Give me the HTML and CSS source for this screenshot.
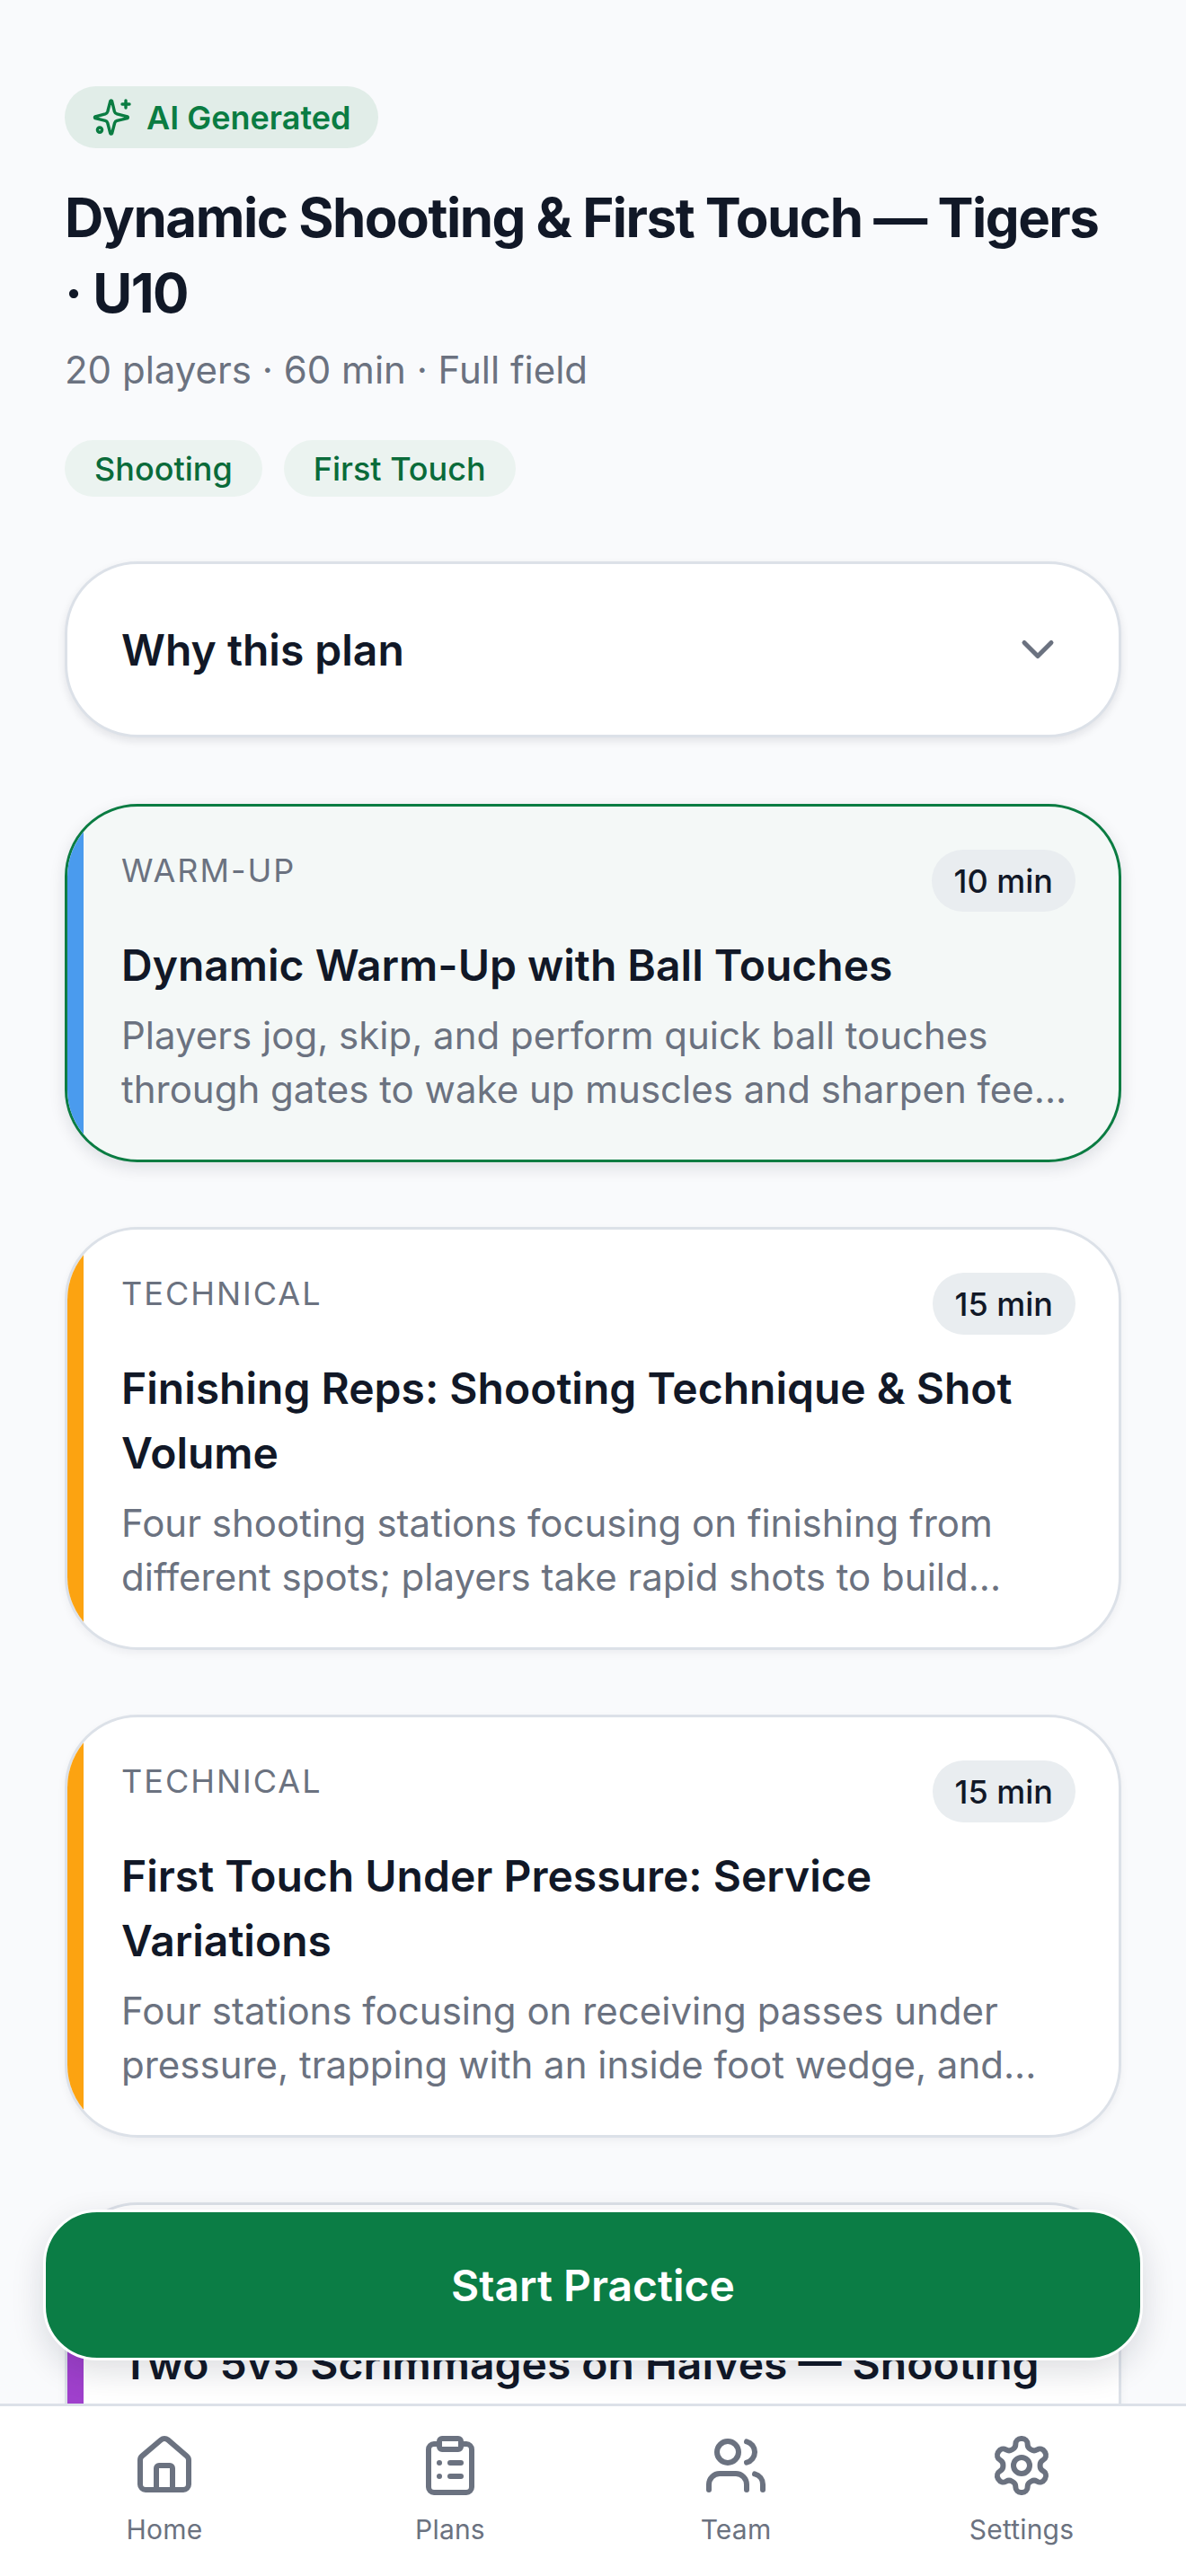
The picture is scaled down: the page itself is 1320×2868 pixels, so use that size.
FILE: index.html
```html
<!DOCTYPE html>
<html lang="en">
<head>
<meta charset="utf-8">
<title>Practice plan</title>
<link rel="stylesheet" href="styles.css">
</head>
<body>
<div class="app">
  <main class="content">
    <div class="badge">
      <svg class="badge-icon" viewBox="0 0 24 24" fill="none" stroke="currentColor" stroke-width="1.7" stroke-linecap="round" stroke-linejoin="round">
        <path d="M8.9 15A2 2 0 0 0 7.6 13.7l-5.6-1.4a.5.5 0 0 1 0-.9L7.6 9.9A2 2 0 0 0 8.9 8.6l1.5-5.8a.5.5 0 0 1 .9 0l1.4 5.8A2 2 0 0 0 14.1 9.9l5.8 1.5a.5.5 0 0 1 0 .9l-5.8 1.4A2 2 0 0 0 12.8 15l-1.5 5.8a.5.5 0 0 1-.9 0z"/>
        <path d="M19 2.5v4"/><path d="M21 4.500h-4"/><circle cx="4.500" cy="18.800" r="1.300"/>
      </svg>
      <span>AI Generated</span>
    </div>
    <h1 class="title">Dynamic Shooting &amp; First Touch — Tigers · U10</h1>
    <p class="meta">20 players · 60 min · Full field</p>
    <div class="chips">
      <span class="chip">Shooting</span>
      <span class="chip">First Touch</span>
    </div>
    <button class="why" type="button">
      <span>Why this plan</span>
      <svg class="chevron" viewBox="0 0 24 24" fill="none" stroke="currentColor" stroke-width="2" stroke-linecap="round" stroke-linejoin="round"><path d="m6 9 6 6 6-6"/></svg>
    </button>
    <div class="cards">
      <article class="card card-active">
        <div class="strip strip-blue"></div>
        <div class="card-body">
          <div class="card-top"><span class="phase">WARM-UP</span><span class="dur">10 min</span></div>
          <h2 class="card-title">Dynamic Warm-Up with Ball Touches</h2>
          <p class="card-desc">Players jog, skip, and perform quick ball touches through gates to wake up muscles and sharpen fee...</p>
        </div>
      </article>
      <article class="card">
        <div class="strip strip-orange"></div>
        <div class="card-body">
          <div class="card-top"><span class="phase">TECHNICAL</span><span class="dur">15 min</span></div>
          <h2 class="card-title">Finishing Reps: Shooting Technique &amp; Shot Volume</h2>
          <p class="card-desc">Four shooting stations focusing on finishing from different spots; players take rapid shots to build...</p>
        </div>
      </article>
      <article class="card">
        <div class="strip strip-orange"></div>
        <div class="card-body">
          <div class="card-top"><span class="phase">TECHNICAL</span><span class="dur">15 min</span></div>
          <h2 class="card-title">First Touch Under Pressure: Service Variations</h2>
          <p class="card-desc">Four stations focusing on receiving passes under pressure, trapping with an inside foot wedge, and...</p>
        </div>
      </article>
      <article class="card card-last">
        <div class="strip strip-purple"></div>
        <div class="card-body">
          <h2 class="card-title card-title-last">Two 5v5 Scrimmages on Halves — Shooting</h2>
        </div>
      </article>
    </div>
    <button class="start" type="button">Start Practice</button>
  </main>
  <nav class="tabs">
    <a class="tab">
      <svg class="tab-icon" viewBox="0 0 24 24" fill="none" stroke="currentColor" stroke-width="2" stroke-linecap="round" stroke-linejoin="round"><path d="M15 21v-8a1 1 0 0 0-1-1h-4a1 1 0 0 0-1 1v8"/><path d="M3 10a2 2 0 0 1 .709-1.528l7-6a2 2 0 0 1 2.582 0l7 6A2 2 0 0 1 21 10v9a2 2 0 0 1-2 2H5a2 2 0 0 1-2-2z"/></svg>
      <span>Home</span>
    </a>
    <a class="tab">
      <svg class="tab-icon" viewBox="0 0 24 24" fill="none" stroke="currentColor" stroke-width="2" stroke-linecap="round" stroke-linejoin="round"><rect x="8" y="2" width="8" height="4" rx="1"/><path d="M16 4h2a2 2 0 0 1 2 2v14a2 2 0 0 1-2 2H6a2 2 0 0 1-2-2V6a2 2 0 0 1 2-2h2"/><path d="M12 11h4"/><path d="M12 16h4"/><path d="M8 11h.01"/><path d="M8 16h.01"/></svg>
      <span>Plans</span>
    </a>
    <a class="tab">
      <svg class="tab-icon" viewBox="0 0 24 24" fill="none" stroke="currentColor" stroke-width="2" stroke-linecap="round" stroke-linejoin="round"><path d="M16 21v-2a4 4 0 0 0-4-4H6a4 4 0 0 0-4 4v2"/><circle cx="9" cy="7" r="4"/><path d="M22 21v-2a4 4 0 0 0-3-3.87"/><path d="M16 3.130a4 4 0 0 1 0 7.750"/></svg>
      <span>Team</span>
    </a>
    <a class="tab">
      <svg class="tab-icon" viewBox="0 0 24 24" fill="none" stroke="currentColor" stroke-width="2" stroke-linecap="round" stroke-linejoin="round"><path d="M12.220 2h-.44a2 2 0 0 0-2 2v.18a2 2 0 0 1-1 1.730l-.43.25a2 2 0 0 1-2 0l-.15-.08a2 2 0 0 0-2.730.73l-.22.38a2 2 0 0 0 .73 2.730l.15.1a2 2 0 0 1 1 1.720v.51a2 2 0 0 1-1 1.740l-.15.09a2 2 0 0 0-.73 2.730l.22.38a2 2 0 0 0 2.730.73l.15-.08a2 2 0 0 1 2 0l.43.25a2 2 0 0 1 1 1.730V20a2 2 0 0 0 2 2h.44a2 2 0 0 0 2-2v-.18a2 2 0 0 1 1-1.730l.43-.25a2 2 0 0 1 2 0l.15.08a2 2 0 0 0 2.730-.73l.22-.39a2 2 0 0 0-.73-2.730l-.15-.08a2 2 0 0 1-1-1.740v-.5a2 2 0 0 1 1-1.740l.15-.09a2 2 0 0 0 .73-2.730l-.22-.38a2 2 0 0 0-2.730-.73l-.15.08a2 2 0 0 1-2 0l-.43-.25a2 2 0 0 1-1-1.730V4a2 2 0 0 0-2-2z"/><circle cx="12" cy="12" r="3"/></svg>
      <span>Settings</span>
    </a>
  </nav>
</div>
</body>
</html>
```

FILE: styles.css
```css
* { box-sizing: border-box; }
html, body { margin: 0; padding: 0; }
body {
  font-family: Inter, "Liberation Sans", sans-serif;
  background: #f9fafc;
  color: #111827;
}
.app {
  position: relative;
  width: 1320px;
  height: 2868px;
  display: flex;
  flex-direction: column;
  overflow: hidden;
}
.content {
  flex: 1;
  min-height: 0;
  overflow: hidden;
  padding: 96px 72px 0;
}
.badge {
  display: inline-flex;
  align-items: center;
  gap: 13px;
  height: 69px;
  padding: 0 30px 0 32px;
  border-radius: 35px;
  background: #e1ede8;
  color: #0a7c42;
  font-size: 36px;
  font-weight: 600;
  vertical-align: top;
}
.badge-icon { width: 48px; height: 48px; flex: none; margin-left: -2px; }
.title {
  margin: 35px 0 0;
  font-size: 60px;
  line-height: 84px;
  font-weight: 700;
  letter-spacing: -1.5px;
}
.meta {
  margin: 14px 0 0;
  font-size: 42px;
  line-height: 60px;
  color: #6b7280;
}
.chips {
  display: flex;
  gap: 24px;
  margin-top: 48px;
}
.chip {
  height: 63px;
  display: flex;
  align-items: center;
  padding: 0 33px;
  border-radius: 32px;
  background: #ebf3f0;
  color: #0a6b3a;
  font-size: 36px;
  font-weight: 500;
}
.why {
  display: flex;
  align-items: center;
  justify-content: space-between;
  width: 100%;
  height: 196px;
  margin-top: 72px;
  padding: 0 60px 0 60px;
  border: 3px solid #dce1e8;
  border-radius: 81px;
  background: #fff;
  box-shadow: 0 4px 10px rgba(17, 24, 39, 0.1);
  color: #111827;
  font: 600 48px Inter, "Liberation Sans", sans-serif;
}
.chevron { width: 60px; height: 60px; color: #6b7280; }
.cards {
  display: flex;
  flex-direction: column;
  gap: 72px;
  margin-top: 74px;
}
.card {
  display: flex;
  flex: none;
  border: 3px solid #dce1e8;
  border-radius: 81px;
  background: #fff;
  overflow: hidden;
  box-shadow: 0 4px 10px rgba(17, 24, 39, 0.05);
}
.card-active {
  border-color: #0a7c42;
  background: #f4f8f7;
  box-shadow: 0 6px 18px rgba(17, 24, 39, 0.12);
}
.card-last { height: 400px; }
.strip { width: 18px; flex: none; }
.strip-blue { background: #4a9bee; }
.strip-orange { background: #fca311; }
.strip-purple { background: #9f40cc; }
.card-body {
  flex: 1;
  min-width: 0;
  padding: 48px 48px 48px 42px;
}
.card-top {
  display: flex;
  justify-content: space-between;
  align-items: flex-start;
  margin-bottom: 24px;
}
.phase {
  font-size: 36px;
  line-height: 46px;
  letter-spacing: 2px;
  color: #6b7280;
}
.dur {
  display: flex;
  align-items: center;
  height: 69px;
  padding: 0 25px;
  border-radius: 35px;
  background: #e9edf0;
  font-size: 36px;
  font-weight: 500;
}
.card-title {
  margin: 0;
  font-size: 48px;
  line-height: 72px;
  font-weight: 600;
}
.card-title-last { margin-top: 93px; white-space: nowrap; }
.card-desc {
  margin: 12px 0 0;
  font-size: 42px;
  line-height: 60px;
  color: #6b7280;
}
.start {
  position: absolute;
  left: 48px;
  top: 2460px;
  width: 1224px;
  height: 168px;
  border: 3px solid #fff;
  border-radius: 60px;
  background: #0b7d45;
  color: #fff;
  font: 600 48px Inter, "Liberation Sans", sans-serif;
  box-shadow: 0 12px 36px rgba(17, 24, 39, 0.14);
}
.tabs {
  flex: none;
  display: grid;
  grid-template-columns: repeat(4, 1fr);
  height: 192px;
  padding: 30px 24px 0;
  border-top: 3px solid #dce1e8;
  background: #fff;
  position: relative;
}
.tab {
  display: flex;
  flex-direction: column;
  align-items: center;
  gap: 15px;
  color: #6b7280;
  font-size: 30px;
  line-height: 40px;
  font-weight: 400;
  letter-spacing: 0.2px;
}
.tab-icon { width: 72px; height: 72px; }
```
